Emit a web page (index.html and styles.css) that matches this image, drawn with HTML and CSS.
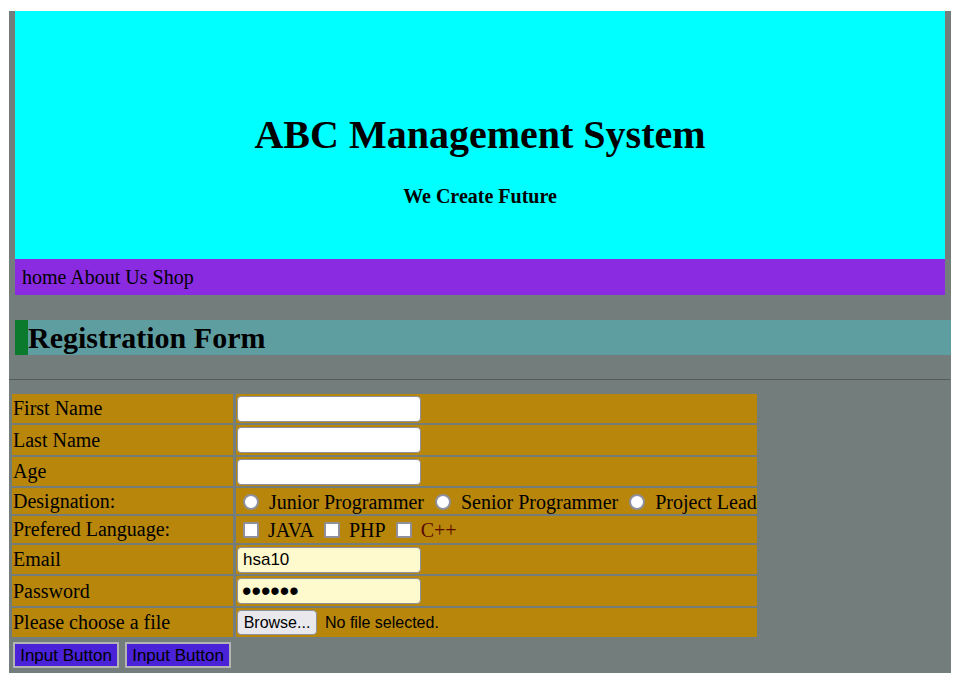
FILE: index.html
```html
<!DOCTYPE html>
<html lang="en">
<head>
<meta charset="utf-8">
<title>ABC Management System</title>
<link rel="stylesheet" href="styles.css">
</head>
<body>
<div class="page">
  <header class="masthead">
    <h1 class="brand">ABC Management System</h1>
    <h4 class="tagline">We Create Future</h4>
  </header>
  <nav class="nav">home About Us Shop</nav>
  <h2 class="title">Registration Form</h2>
  <hr class="rule">
  <form class="reg">
    <table class="form-table">
      <tr class="r1"><td class="lbl">First Name</td><td class="fld"><input class="txt" type="text"></td></tr>
      <tr class="r2"><td class="lbl">Last Name</td><td class="fld"><input class="txt" type="text"></td></tr>
      <tr class="r3"><td class="lbl">Age</td><td class="fld"><input class="txt" type="text"></td></tr>
      <tr class="r4"><td class="lbl">Designation:</td><td class="fld opts"><input class="radio first" type="radio" name="d"><span>Junior Programmer</span><input class="radio" type="radio" name="d"><span>Senior Programmer</span><input class="radio" type="radio" name="d"><span>Project Lead</span></td></tr>
      <tr class="r5"><td class="lbl">Prefered Language:</td><td class="fld opts"><input class="check first" type="checkbox"><span>JAVA</span><input class="check" type="checkbox"><span>PHP</span><input class="check" type="checkbox"><span class="cpp">C++</span></td></tr>
      <tr class="r6"><td class="lbl">Email</td><td class="fld"><input class="txt filled" type="text" value="hsa10"></td></tr>
      <tr class="r7"><td class="lbl">Password</td><td class="fld"><input class="txt filled pwd" type="password" value="123456"></td></tr>
      <tr class="r8"><td class="lbl">Please choose a file</td><td class="fld"><button type="button" class="browse">Browse...</button><span class="nofile">No file selected.</span></td></tr>
    </table>
    <div class="actions"><button type="button" class="ibtn">Input Button</button><button type="button" class="ibtn">Input Button</button></div>
  </form>
</div>
</body>
</html>
```
FILE: styles.css
```css
html, body {
  margin: 0;
  padding: 0;
  background: #ffffff;
}
body {
  font-family: "Liberation Serif", "Times New Roman", serif;
  font-size: 20px;
  color: #000;
}
.page {
  width: 942px;
  margin: 11px 0 0 9px;
  background: #737d7b;
  padding-bottom: 5px;
}
.masthead {
  margin: 0 6px;
  background: #00ffff;
  height: 248px;
  padding-top: 100px;
  box-sizing: border-box;
  text-align: center;
}
.brand {
  margin: 0;
  font-size: 40px;
  font-weight: bold;
  line-height: normal;
}
.tagline {
  margin: 27px 0 0;
  font-size: 20px;
  font-weight: bold;
  line-height: normal;
}
.nav {
  margin: 0 6px;
  background: #8a2be2;
  height: 36px;
  box-sizing: border-box;
  padding: 7px 0 0 7px;
  line-height: normal;
}
.title {
  margin: 25px 0 0 6px;
  height: 35px;
  line-height: 35px;
  font-size: 30px;
  font-weight: bold;
  background: #5f9ea0;
  border-left: 13px solid #0b7a2c;
}
.rule {
  margin: 24px 1px 0 0;
  border: 0;
  border-top: 1px solid #555a59;
  height: 0;
}
.reg {
  margin: 0;
}
.form-table {
  margin-top: 12px;
  border-collapse: separate;
  border-spacing: 3px 2px;
}
.form-table td {
  background: #b8860b;
  padding: 0 0 0 1px;
  vertical-align: middle;
  line-height: normal;
  white-space: nowrap;
}
.lbl { width: 220px; }
.fld { width: 520px; }
.r1 td { height: 29px; }
.r2 td { height: 30px; }
.r3 td { height: 29px; }
.r4 td { height: 26px; }
.r5 td { height: 27px; }
.r6 td { height: 29px; }
.r7 td { height: 30px; }
.r8 td { height: 29px; }
.txt {
  box-sizing: border-box;
  width: 184px;
  height: 26px;
  margin: 0;
  padding: 0 5px;
  border: 1px solid #8f8f9d;
  border-radius: 4px;
  background: #ffffff;
  font-family: "Liberation Sans", Arial, sans-serif;
  font-size: 17px;
  color: #000;
  vertical-align: middle;
  outline: none;
}
.txt.filled {
  background: #fffacd;
}
.txt.pwd {
  font-size: 27px;
  padding-left: 4px;
}
.opts span {
  vertical-align: middle;
}
.radio {
  appearance: none;
  -webkit-appearance: none;
  box-sizing: border-box;
  width: 16px;
  height: 16px;
  margin: 0 10px 0 11px;
  border: 2px solid #8f8f9d;
  border-radius: 50%;
  background: #fff;
  vertical-align: middle;
}
.check {
  appearance: none;
  -webkit-appearance: none;
  box-sizing: border-box;
  width: 16px;
  height: 16px;
  margin: 0 9px 0 10px;
  border: 2px solid #8f8f9d;
  border-radius: 2px;
  background: #fff;
  vertical-align: middle;
}
.radio.first, .check.first { margin-left: 6px; }
.cpp { color: #5a0a00; }
.browse {
  box-sizing: border-box;
  width: 80px;
  height: 25px;
  margin: 0;
  padding: 0;
  border: 1px solid #8f8f9d;
  border-radius: 4px;
  background: #e9e9ed;
  font-family: "Liberation Sans", Arial, sans-serif;
  font-size: 16px;
  color: #000;
  vertical-align: middle;
}
.nofile {
  margin-left: 8px;
  font-family: "Liberation Sans", Arial, sans-serif;
  font-size: 16px;
  vertical-align: middle;
}
.actions {
  display: flex;
  gap: 6px;
  margin: 3px 0 0 4px;
}
.ibtn {
  box-sizing: border-box;
  width: 106px;
  height: 26px;
  margin: 0;
  padding: 2px 0 0;
  border: 2px solid #b3b3b3;
  background: #4a22d8;
  font-family: "Liberation Sans", Arial, sans-serif;
  font-size: 17px;
  color: #000;
}
```
